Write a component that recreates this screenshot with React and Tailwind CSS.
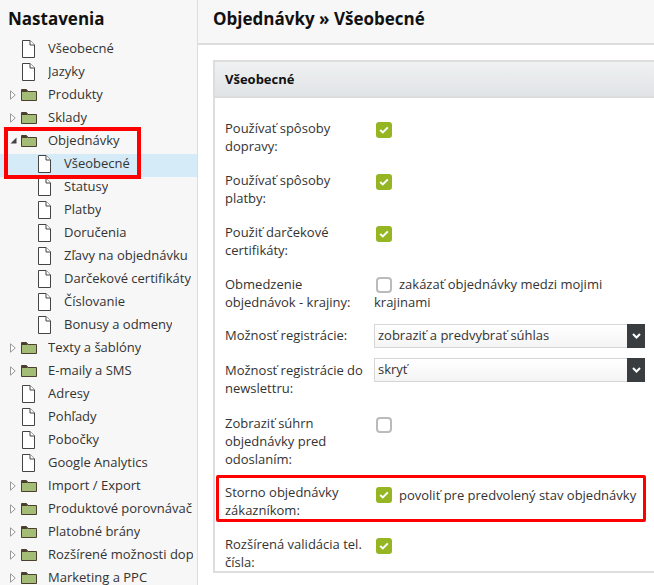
const font = { fontFamily: '"Open Sans", sans-serif' };

const tree = [
  { label: "Všeobecné" },
  { label: "Jazyky" },
  { label: "Produkty", folder: true },
  { label: "Sklady", folder: true },
  { label: "Objednávky", folder: true, open: true },
  { label: "Všeobecné", child: true, active: true },
  { label: "Statusy", child: true },
  { label: "Platby", child: true },
  { label: "Doručenia", child: true },
  { label: "Zľavy na objednávku", child: true },
  { label: "Darčekové certifikáty", child: true },
  { label: "Číslovanie", child: true },
  { label: "Bonusy a odmeny", child: true },
  { label: "Texty a šablóny", folder: true },
  { label: "E-maily a SMS", folder: true },
  { label: "Adresy" },
  { label: "Pohľady" },
  { label: "Pobočky" },
  { label: "Google Analytics" },
  { label: "Import / Export", folder: true },
  { label: "Produktové porovnávač", folder: true },
  { label: "Platobné brány", folder: true },
  { label: "Rozšírené možnosti dop", folder: true },
  { label: "Marketing a PPC", folder: true },
];

function DocIcon() {
  return (
    <svg width="13" height="18" viewBox="0 0 13 18" className="shrink-0">
      <path d="M1 .5h7l4.5 4.5v12.5H.5V.5z" fill="#fff" stroke="#444" />
      <path d="M8 .5V5h4.5" fill="#fff" stroke="#444" />
    </svg>
  );
}

function FolderIcon() {
  return (
    <svg width="16" height="13" viewBox="0 0 16 13" className="shrink-0">
      <path d="M.5 12.5V1.5h5l1.5 2h8.5v9z" fill="#a3bd76" stroke="#4b4030" />
      <path d="M1 2h4.6l1.2 2H1z" fill="#4b4030" />
    </svg>
  );
}

function Arrow({ open }) {
  if (open) {
    return (
      <svg width="7" height="7" viewBox="0 0 7 7" className="shrink-0">
        <path d="M6.5 .5v6h-6z" fill="#444" />
      </svg>
    );
  }
  return (
    <svg width="6" height="10" viewBox="0 0 6 10" className="shrink-0">
      <path d="M.5 .8 5.2 5 .5 9.2z" fill="#fff" stroke="#999" />
    </svg>
  );
}

function TreeRow({ item }) {
  return (
    <div
      className={`flex h-[23px] items-center pb-1 pr-[4px] whitespace-nowrap ${
        item.active ? "bg-[#d5ebf7]" : ""
      }`}
    >
      {item.child ? (
        <span className="flex w-[64px] shrink-0 pl-[38px]">
          <DocIcon />
        </span>
      ) : item.folder ? (
        <>
          <span className="flex w-[21px] shrink-0 justify-center pl-[5px]">
            <Arrow open={item.open} />
          </span>
          <span className="flex w-[27px] shrink-0">
            <FolderIcon />
          </span>
        </>
      ) : (
        <span className="flex w-[48px] shrink-0 pl-[22px]">
          <DocIcon />
        </span>
      )}
      <span className="min-w-0 overflow-hidden pb-[2px]">{item.label}</span>
    </div>
  );
}

function Check({ on }) {
  if (!on) {
    return (
      <span className="block h-4 w-4 shrink-0 rounded-[4px] border-2 border-[#bbbbbb] bg-white" />
    );
  }
  return (
    <span className="flex h-4 w-4 shrink-0 items-center justify-center rounded-[3px] bg-[#95b523]">
      <svg width="10" height="8" viewBox="0 0 10 8">
        <path d="M1.2 4 3.8 6.4 8.8 1.4" fill="none" stroke="#fff" strokeWidth="2" />
      </svg>
    </span>
  );
}

function Select({ value }) {
  return (
    <div className="flex h-6 w-[271px] items-stretch border border-[#d6d6d6] bg-gradient-to-b from-[#ffffff] to-[#f4f4f4] text-[13px]">
      <span className="flex-1 pl-[3px] leading-[21px]">{value}</span>
      <span className="-my-px -mr-px flex w-[18px] items-center justify-center bg-[#393d40]">
        <svg width="9" height="6" viewBox="0 0 9 6">
          <path d="M1 1l3.5 3.5L8 1" fill="none" stroke="#fff" strokeWidth="2" />
        </svg>
      </span>
    </div>
  );
}

function FormRow({ label, className = "", children }) {
  return (
    <div className={`flex ${className}`}>
      <div className="w-[149px] shrink-0 pr-[8px]">{label}</div>
      <div className="min-w-0 flex-1">{children}</div>
    </div>
  );
}

export default function App() {
  return (
    <div
      style={font}
      className="relative flex h-[585px] w-[654px] overflow-hidden bg-white text-[13px] leading-[18px] text-[#333333]"
    >
      {/* Sidebar */}
      <aside className="h-full w-[198px] shrink-0 overflow-hidden border-r border-[#dddddd] bg-[#f7f7f7]">
        <h2 className="h-[39px] pl-2 pt-[7px] text-[17px] leading-6 font-bold text-[#111111]">
          Nastavenia
        </h2>
        {tree.map((item, i) => (
          <TreeRow key={i} item={item} />
        ))}
      </aside>

      {/* Main */}
      <main className="min-w-0 flex-1">
        <div className="flex h-[45px] items-center border-b-2 border-[#dddddd] bg-[#f7f7f7] pb-[5px] pl-[15px] text-[17px] font-bold text-[#111111]">
          Objednávky » Všeobecné
        </div>

        <div className="ml-[15px] mt-[15px] -mr-4 border-2 border-[#dddddd]">
          <div className="flex h-[36px] items-center border-b-2 border-[#dddddd] bg-gradient-to-b from-[#eff1f2] to-[#e1e4e6] pl-[10px] font-bold text-[#111111]">
            Všeobecné
          </div>

          <div className="pl-[10px] pt-[21px]">
            <FormRow label="Používať spôsoby dopravy:" className="mb-4">
              <div className="pl-[2px] pt-[3px]">
                <Check on />
              </div>
            </FormRow>
            <FormRow label="Používať spôsoby platby:" className="mb-4">
              <div className="pl-[2px] pt-[3px]">
                <Check on />
              </div>
            </FormRow>
            <FormRow label="Použiť darčekové certifikáty:" className="mb-4">
              <div className="pl-[2px] pt-[3px]">
                <Check on />
              </div>
            </FormRow>
            <FormRow label="Obmedzenie objednávok - krajiny:" className="mb-[13px]">
              <div className="w-[270px]">
                <div className="flex items-center gap-[7px] pl-[2px]">
                  <span className="pt-[2px]">
                    <Check />
                  </span>
                  <span className="whitespace-nowrap">zakázať objednávky medzi mojimi</span>
                </div>
                <div>krajinami</div>
              </div>
            </FormRow>
            <FormRow
              label={<span className="block pt-[2px]">Možnosť registrácie:</span>}
              className="mb-[10px]"
            >
              <Select value="zobraziť a predvybrať súhlas" />
            </FormRow>
            <FormRow
              label={<span className="block pt-[3px]">Možnosť registrácie do newslettru:</span>}
              className="mb-[17px]"
            >
              <Select value="skryť" />
            </FormRow>
            <FormRow label="Zobraziť súhrn objednávky pred odoslaním:" className="mb-[15px]">
              <div className="pl-[2px] pt-[3px]">
                <Check />
              </div>
            </FormRow>
            <FormRow label="Storno objednávky zákazníkom:" className="mb-4">
              <div className="flex items-center gap-[7px] pl-[2px] pt-[3px]">
                <Check on />
                <span className="whitespace-nowrap">povoliť pre predvolený stav objednávky</span>
              </div>
            </FormRow>
            <FormRow label="Rozšírená validácia tel. čísla:">
              <div className="pl-[2px] pt-[3px]">
                <Check on />
              </div>
            </FormRow>
          </div>
        </div>
      </main>

      {/* Red highlights */}
      <div className="pointer-events-none absolute left-[4px] top-[127px] h-[52px] w-[137px] border-4 border-[#ff0000]" />
      <div className="pointer-events-none absolute left-[216px] top-[475px] h-[47px] w-[430px] rounded-[2px] border-[3px] border-[#ff0000]" />
    </div>
  );
}
